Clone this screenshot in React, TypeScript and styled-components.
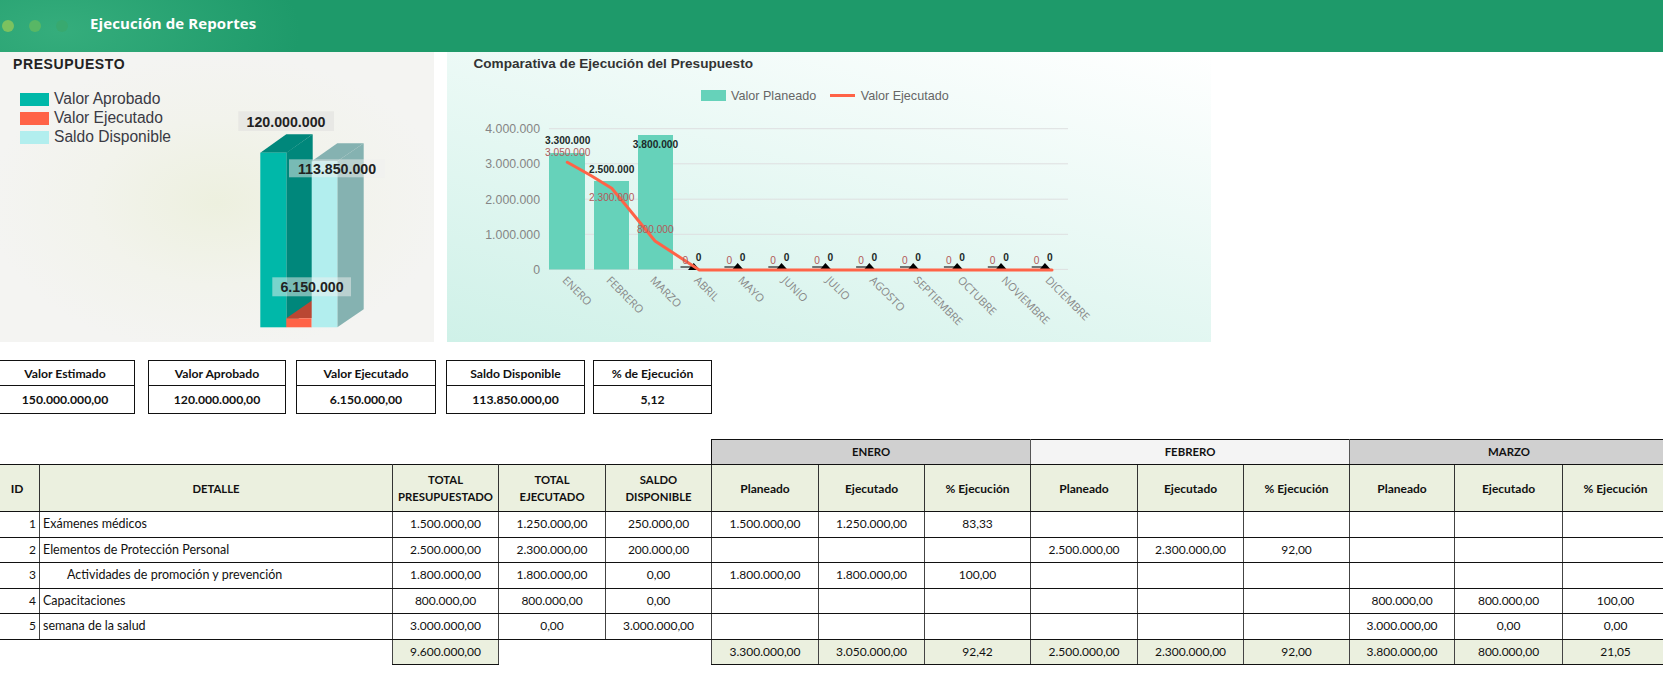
import React from 'react';
import styled, { createGlobalStyle } from 'styled-components';

const Global = createGlobalStyle`
  html, body { margin: 0; padding: 0; background: #fff; }
  body { width: 1663px; height: 700px; overflow: hidden; font-family: "Liberation Sans", Arial, sans-serif; }
`;
const Page = styled.div`width: 1663px; height: 700px; overflow: hidden;`;
const Header = styled.header`
  height: 52px; display: flex; align-items: center; padding-left: 2px; box-sizing: border-box;
  background: radial-gradient(ellipse 240px 110px at 60px 60%, #35ad7c 0%, #1e9a6a 100%), #1e9a6a;
`;
const Dot = styled.span<{ $c: string }>`
  width: 12px; height: 12px; border-radius: 50%; background: ${p => p.$c}; margin-right: 15px; flex: none;
`;
const AppTitle = styled.h1`
  margin: 0 0 7px 7px; font: 700 15px "Open Sans", sans-serif; color: #fff; letter-spacing: 0.1px;
`;
const ChartRow = styled.section`display: flex; gap: 13px; height: 290px;`;
const BudgetPanel = styled.div`
  width: 434px; display: flex;
  background: radial-gradient(ellipse 230px 150px at 50% 52%, #edf0df 0%, #f2f3ec 55%, #f4f4f2 100%);
`;
const BudgetLeft = styled.div`width: 230px; flex: none;`;
const BudgetTitle = styled.h2`
  margin: 4px 0 0 13px; font: 700 14px/16px "Liberation Sans", sans-serif; color: #222; letter-spacing: 0.6px;
`;
const BudgetLegend = styled.ul`list-style: none; margin: 17.5px 0 0 20px; padding: 0; display: flex; flex-direction: column; gap: 0;`;
const BudgetLegendItem = styled.li`display: flex; align-items: center; gap: 5px; height: 19px; font-size: 15.6px; color: #3a3a44;`;
const BudgetSwatch = styled.span<{ $c: string }>`width: 29px; height: 13px; background: ${p => p.$c};`;
const Budget3D = styled.svg`width: 170px; height: 232px; margin-top: 48px; flex: none; overflow: visible;`;
const BudgetLabel = styled.text`font: 700 14.2px "Liberation Sans", sans-serif; fill: #222; text-anchor: middle;`;

const ComparePanel = styled.div`
  width: 764px; display: flex; flex-direction: column;
  background: linear-gradient(194deg, #ffffff 0%, #cff1e8 100%);
`;
const CompareTitle = styled.h2`
  margin: 0; height: 26px; padding: 4px 0 0 26.5px; box-sizing: border-box;
  font: 700 13.6px/15px "Liberation Sans", sans-serif; color: #333;
`;
const CompareLegend = styled.div`display: flex; align-items: center; height: 37px; padding-left: 253.5px; font-size: 12.6px; color: #666; margin-top: -1px;`;
const CompareBox = styled.span`width: 25px; height: 11px; background: #66d2ba; margin-right: 5.5px;`;
const CompareLine = styled.span`width: 25px; height: 3px; background: #ff6347; margin: 0 5.5px 0 14px;`;
const CompareSvg = styled.svg`width: 764px; height: 228px; flex: none; overflow: visible;`;
const AxisLabel = styled.text`font: 12.3px "Liberation Sans", sans-serif; fill: #858585; text-anchor: end;`;
const MonthLabel = styled.text`font: 11px "Open Sans", sans-serif; fill: #888;`;
const PlanLabel = styled.text`font: 700 10.2px "Liberation Sans", sans-serif; fill: #1c2a2a; text-anchor: middle;`;
const ExecLabel = styled.text`font: 10.2px "Liberation Sans", sans-serif; fill: #b25a5a; text-anchor: middle;`;

const StatRow = styled.section`display: flex; margin: 18px 0 0 -5px; height: 54px;`;
const Stat = styled.div<{ $w: number; $ml: number }>`
  width: ${p => p.$w}px; margin-left: ${p => p.$ml}px; flex: none; box-sizing: border-box; border: 1px solid #111;
  display: grid; grid-template-rows: 25px 1fr; font: 700 12.2px "Lato", sans-serif; color: #111; text-align: center;
`;
const StatHead = styled.div`display: flex; align-items: center; justify-content: center; border-bottom: 1px solid #111;`;
const StatValue = styled.div`display: flex; align-items: center; justify-content: center;`;

const Table = styled.table`
  margin: 25px 0 0 -6px; border-collapse: collapse; table-layout: fixed; width: 1674px;
  font: 12px "Lato", sans-serif; color: #111;
`;
const Col = styled.col<{ $w: number }>`width: ${p => p.$w}px;`;
const Row = styled.tr<{ $h: number }>`height: ${p => p.$h}px;`;
const Blank = styled.td`border: none; padding: 0;`;
const MonthHead = styled.th<{ $bg: string }>`
  background: ${p => p.$bg}; border: 1px solid #111; border-right-color: #555; padding: 0 0 2px; font-size: 11.4px; font-weight: 700; text-align: center;
`;
const ColHead = styled.th<{ $upper?: boolean }>`
  background: #ebf0df; border: 1px solid #111; border-left-color: #333; border-right-color: #333;
  padding: 0; font-size: ${p => (p.$upper ? 11.3 : 12)}px; font-weight: 700; line-height: 17px; text-align: center;
`;
const Cell = styled.td<{ $align?: string; $pad?: number; $tint?: boolean }>`
  border: 1px solid #111; border-left-color: #444; border-right-color: #444;
  padding: 0 ${p => (p.$align === 'right' ? 3 : 0)}px 2px ${p => p.$pad ?? 0}px;
  text-align: ${p => p.$align ?? 'center'};
  background: ${p => (p.$tint ? '#ebf0df' : 'transparent')};
  white-space: nowrap;
`;
const DetailCell = styled(Cell)`font-size: 12.5px;`;

const cols = [45, 353, 106, 107, 106, 107, 106, 106, 107, 106, 106, 105, 108, 106];
const stats = [
  { w: 140, ml: 0, h: 'Valor Estimado', v: '150.000.000,00' },
  { w: 138, ml: 13, h: 'Valor Aprobado', v: '120.000.000,00' },
  { w: 140, ml: 10, h: 'Valor Ejecutado', v: '6.150.000,00' },
  { w: 139, ml: 10, h: 'Saldo Disponible', v: '113.850.000,00' },
  { w: 119, ml: 8, h: '% de Ejecución', v: '5,12' },
];
const rows = [
  { id: 1, d: 'Exámenes médicos', pad: 3, h: 26, t: ['1.500.000,00', '1.250.000,00', '250.000,00'], m: ['1.500.000,00', '1.250.000,00', '83,33', '', '', '', '', '', ''] },
  { id: 2, d: 'Elementos de Protección Personal', pad: 3, h: 25, t: ['2.500.000,00', '2.300.000,00', '200.000,00'], m: ['', '', '', '2.500.000,00', '2.300.000,00', '92,00', '', '', ''] },
  { id: 3, d: 'Actividades de promoción y prevención', pad: 27, h: 26, t: ['1.800.000,00', '1.800.000,00', '0,00'], m: ['1.800.000,00', '1.800.000,00', '100,00', '', '', '', '', '', ''] },
  { id: 4, d: 'Capacitaciones', pad: 3, h: 25, t: ['800.000,00', '800.000,00', '0,00'], m: ['', '', '', '', '', '', '800.000,00', '800.000,00', '100,00'] },
  { id: 5, d: 'semana de la salud', pad: 3, h: 26, t: ['3.000.000,00', '0,00', '3.000.000,00'], m: ['', '', '', '', '', '', '3.000.000,00', '0,00', '0,00'] },
];
const totals = ['3.300.000,00', '3.050.000,00', '92,42', '2.500.000,00', '2.300.000,00', '92,00', '3.800.000,00', '800.000,00', '21,05'];
const months = ['ENERO', 'FEBRERO', 'MARZO', 'ABRIL', 'MAYO', 'JUNIO', 'JULIO', 'AGOSTO', 'SEPTIEMBRE', 'OCTUBRE', 'NOVIEMBRE', 'DICIEMBRE'];
const pitch = 43.9;
const cx = (i: number) => 567.3 + pitch * i;

function Budget() {
  return (
    <Budget3D viewBox="230 100 170 232">
      <polygon points="260.3,152.7 286.3,134.3 312.7,134.3 286.7,152.7" fill="#00877b" />
      <polygon points="286.3,152.7 312.7,134.3 312.7,309 286.3,327.3" fill="#00877b" />
      <rect x="260.3" y="152.7" width="26" height="174.6" fill="#00b8a9" />
      <polygon points="286.3,318.3 312,300.6 312,318.3" fill="#ba4733" />
      <rect x="286.3" y="318.3" width="25.4" height="9" fill="#ff6347" />
      <polygon points="311.7,161.3 337.3,143.3 363.7,143.3 337.3,161.3" fill="#85b2b1" />
      <polygon points="337.3,161.3 363.7,143.3 363.7,309.3 337.3,327.3" fill="#85b2b1" />
      <rect x="311.7" y="161.3" width="25.6" height="166" fill="#b2eeee" />
      <rect x="238.3" y="111.3" width="95.7" height="19.7" fill="#e4e4e2" fillOpacity="0.75" />
      <BudgetLabel x="286" y="126.5">120.000.000</BudgetLabel>
      <rect x="289" y="159.3" width="96" height="18" fill="#efefef" fillOpacity="0.5" />
      <BudgetLabel x="337" y="173.5">113.850.000</BudgetLabel>
      <rect x="272.3" y="277.3" width="78.7" height="19" fill="#f0f0f0" fillOpacity="0.5" />
      <BudgetLabel x="312" y="292">6.150.000</BudgetLabel>
    </Budget3D>
  );
}

function Compare() {
  const ys = [128.7, 163.8, 199.2, 234.3, 269.4];
  const ticks = ['4.000.000', '3.000.000', '2.000.000', '1.000.000', '0'];
  const bars = [{ x: 549, w: 36, y: 153 }, { x: 594, w: 35, y: 181 }, { x: 638, w: 35, y: 135 }];
  return (
    <CompareSvg viewBox="447 114 764 228">
      {ys.map(y => <line key={y} x1="549" x2="1068" y1={y} y2={y} stroke="#dedfe0" strokeWidth="1" />)}
      {ticks.map((t, i) => <AxisLabel key={t} x="540" y={ys[i] + 4.5}>{t}</AxisLabel>)}
      {bars.map(b => <rect key={b.x} x={b.x} y={b.y} width={b.w} height={269.5 - b.y} fill="#66d2ba" />)}
      {months.slice(3).map((m, k) => {
        const c = cx(k + 3);
        return (
          <g key={m}>
            <line x1={c - 18.5} x2={c - 6} y1="267" y2="267" stroke="#222" strokeWidth="1.2" />
            <polygon points={`${c - 5.3},263 ${c - 11},270 ${c + 1},270`} fill="#000" />
          </g>
        );
      })}
      <polyline
        points="567.3,162.3 590,175 611.7,188.3 624,203 655,241 699.3,270 1052,270"
        fill="none" stroke="#ff6347" strokeWidth="3" strokeLinejoin="round" strokeLinecap="round"
      />
      <PlanLabel x="567.7" y="143.6">3.300.000</PlanLabel>
      <ExecLabel x="567.7" y="156.3">3.050.000</ExecLabel>
      <PlanLabel x="611.7" y="173">2.500.000</PlanLabel>
      <ExecLabel x="611.7" y="201.3">2.300.000</ExecLabel>
      <PlanLabel x="655.5" y="148.3">3.800.000</PlanLabel>
      <ExecLabel x="655.3" y="232.7">800.000</ExecLabel>
      {months.slice(3).map((m, k) => {
        const c = cx(k + 3);
        return (
          <g key={m}>
            <PlanLabel x={c - 0.3} y="261">0</PlanLabel>
            <ExecLabel x={c - 13.6} y="263.7">0</ExecLabel>
          </g>
        );
      })}
      {months.map((m, i) => (
        <MonthLabel key={m} x={cx(i) - 5.5} y="281" transform={`rotate(45 ${cx(i) - 5.5} 281)`}>{m}</MonthLabel>
      ))}
    </CompareSvg>
  );
}

export default function App() {
  return (
    <Page>
      <Global />
      <Header>
        <Dot $c="#7cc25f" />
        <Dot $c="#58b765" />
        <Dot $c="#38a96f" />
        <AppTitle>Ejecución de Reportes</AppTitle>
      </Header>
      <ChartRow>
        <BudgetPanel>
          <BudgetLeft>
            <BudgetTitle>PRESUPUESTO</BudgetTitle>
            <BudgetLegend>
              <BudgetLegendItem><BudgetSwatch $c="#00b8a9" />Valor Aprobado</BudgetLegendItem>
              <BudgetLegendItem><BudgetSwatch $c="#ff6347" />Valor Ejecutado</BudgetLegendItem>
              <BudgetLegendItem><BudgetSwatch $c="#b2eeee" />Saldo Disponible</BudgetLegendItem>
            </BudgetLegend>
          </BudgetLeft>
          <Budget />
        </BudgetPanel>
        <ComparePanel>
          <CompareTitle>Comparativa de Ejecución del Presupuesto</CompareTitle>
          <CompareLegend>
            <CompareBox />Valor Planeado<CompareLine />Valor Ejecutado
          </CompareLegend>
          <Compare />
        </ComparePanel>
      </ChartRow>
      <StatRow>
        {stats.map(s => (
          <Stat key={s.h} $w={s.w} $ml={s.ml}>
            <StatHead>{s.h}</StatHead>
            <StatValue>{s.v}</StatValue>
          </Stat>
        ))}
      </StatRow>
      <Table>
        <colgroup>{cols.map((w, i) => <Col key={i} $w={w} />)}</colgroup>
        <tbody>
          <Row $h={25}>
            <Blank colSpan={5} />
            <MonthHead colSpan={3} $bg="#d0d0d0">ENERO</MonthHead>
            <MonthHead colSpan={3} $bg="#f4f4f4">FEBRERO</MonthHead>
            <MonthHead colSpan={3} $bg="#d0d0d0">MARZO</MonthHead>
          </Row>
          <Row $h={47}>
            <ColHead>ID</ColHead>
            <ColHead $upper>DETALLE</ColHead>
            <ColHead $upper>TOTAL<br />PRESUPUESTADO</ColHead>
            <ColHead $upper>TOTAL<br />EJECUTADO</ColHead>
            <ColHead $upper>SALDO<br />DISPONIBLE</ColHead>
            {[0, 1, 2].flatMap(g => ['Planeado', 'Ejecutado', '% Ejecución'].map(h => <ColHead key={g + h}>{h}</ColHead>))}
          </Row>
          {rows.map(r => (
            <Row key={r.id} $h={r.h}>
              <Cell $align="right">{r.id}</Cell>
              <DetailCell $align="left" $pad={r.pad}>{r.d}</DetailCell>
              {r.t.map((v, i) => <Cell key={i}>{v}</Cell>)}
              {r.m.map((v, i) => <Cell key={i}>{v}</Cell>)}
            </Row>
          ))}
          <Row $h={25}>
            <Blank colSpan={2} />
            <Cell $tint>9.600.000,00</Cell>
            <Blank colSpan={2} />
            {totals.map((v, i) => <Cell key={i} $tint>{v}</Cell>)}
          </Row>
        </tbody>
      </Table>
    </Page>
  );
}
